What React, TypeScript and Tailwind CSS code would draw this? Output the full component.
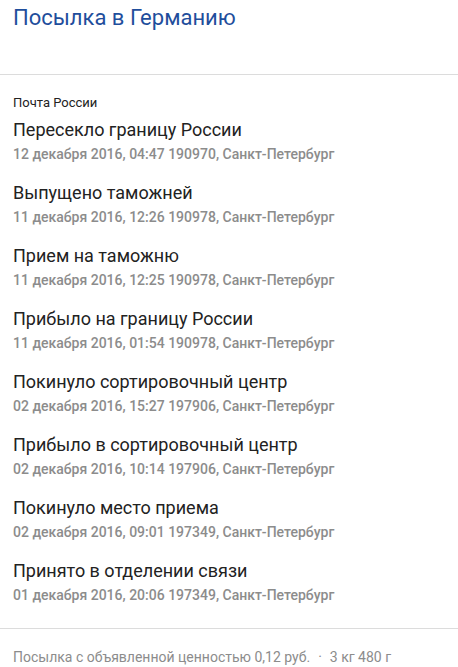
const events = [
  { title: 'Пересекло границу России', info: '12 декабря 2016, 04:47 190970, Санкт-Петербург' },
  { title: 'Выпущено таможней', info: '11 декабря 2016, 12:26 190978, Санкт-Петербург' },
  { title: 'Прием на таможню', info: '11 декабря 2016, 12:25 190978, Санкт-Петербург' },
  { title: 'Прибыло на границу России', info: '11 декабря 2016, 01:54 190978, Санкт-Петербург' },
  { title: 'Покинуло сортировочный центр', info: '02 декабря 2016, 15:27 197906, Санкт-Петербург' },
  { title: 'Прибыло в сортировочный центр', info: '02 декабря 2016, 10:14 197906, Санкт-Петербург' },
  { title: 'Покинуло место приема', info: '02 декабря 2016, 09:01 197349, Санкт-Петербург' },
  { title: 'Принято в отделении связи', info: '01 декабря 2016, 20:06 197349, Санкт-Петербург' },
];

export default function App() {
  return (
    <div className="w-[458px] h-[667px] bg-white font-['Roboto',sans-serif] overflow-hidden">
      <div className="px-[13px] pt-[4px] h-[74px]">
        <h1 className="text-[22px] leading-[28px] text-[#1f4e9c]">Посылка в Германию</h1>
      </div>
      <div className="border-t border-[#dcdcdc] px-[13px] pt-[20px] pb-[6px]">
        <div className="text-[13px] leading-[16px] text-[#222]">Почта России</div>
        <div className="pt-[7px]">
          {events.map((e) => (
            <div key={e.info} className="h-[63px]">
              <div className="text-[18px] leading-[24px] text-[#222]">{e.title}</div>
              <div className="mt-[4px] text-[14px] leading-[16px] font-medium text-[#8c8c8c]">{e.info}</div>
            </div>
          ))}
        </div>
      </div>
      <div className="border-t border-[#dcdcdc] px-[13px] pt-[20px]">
        <div className="text-[14px] leading-[16px] text-[#8c8c8c]">
          Посылка с объявленной ценностью 0,12 руб.<span className="mx-[8px]">·</span>3 кг 480 г
        </div>
      </div>
    </div>
  );
}
